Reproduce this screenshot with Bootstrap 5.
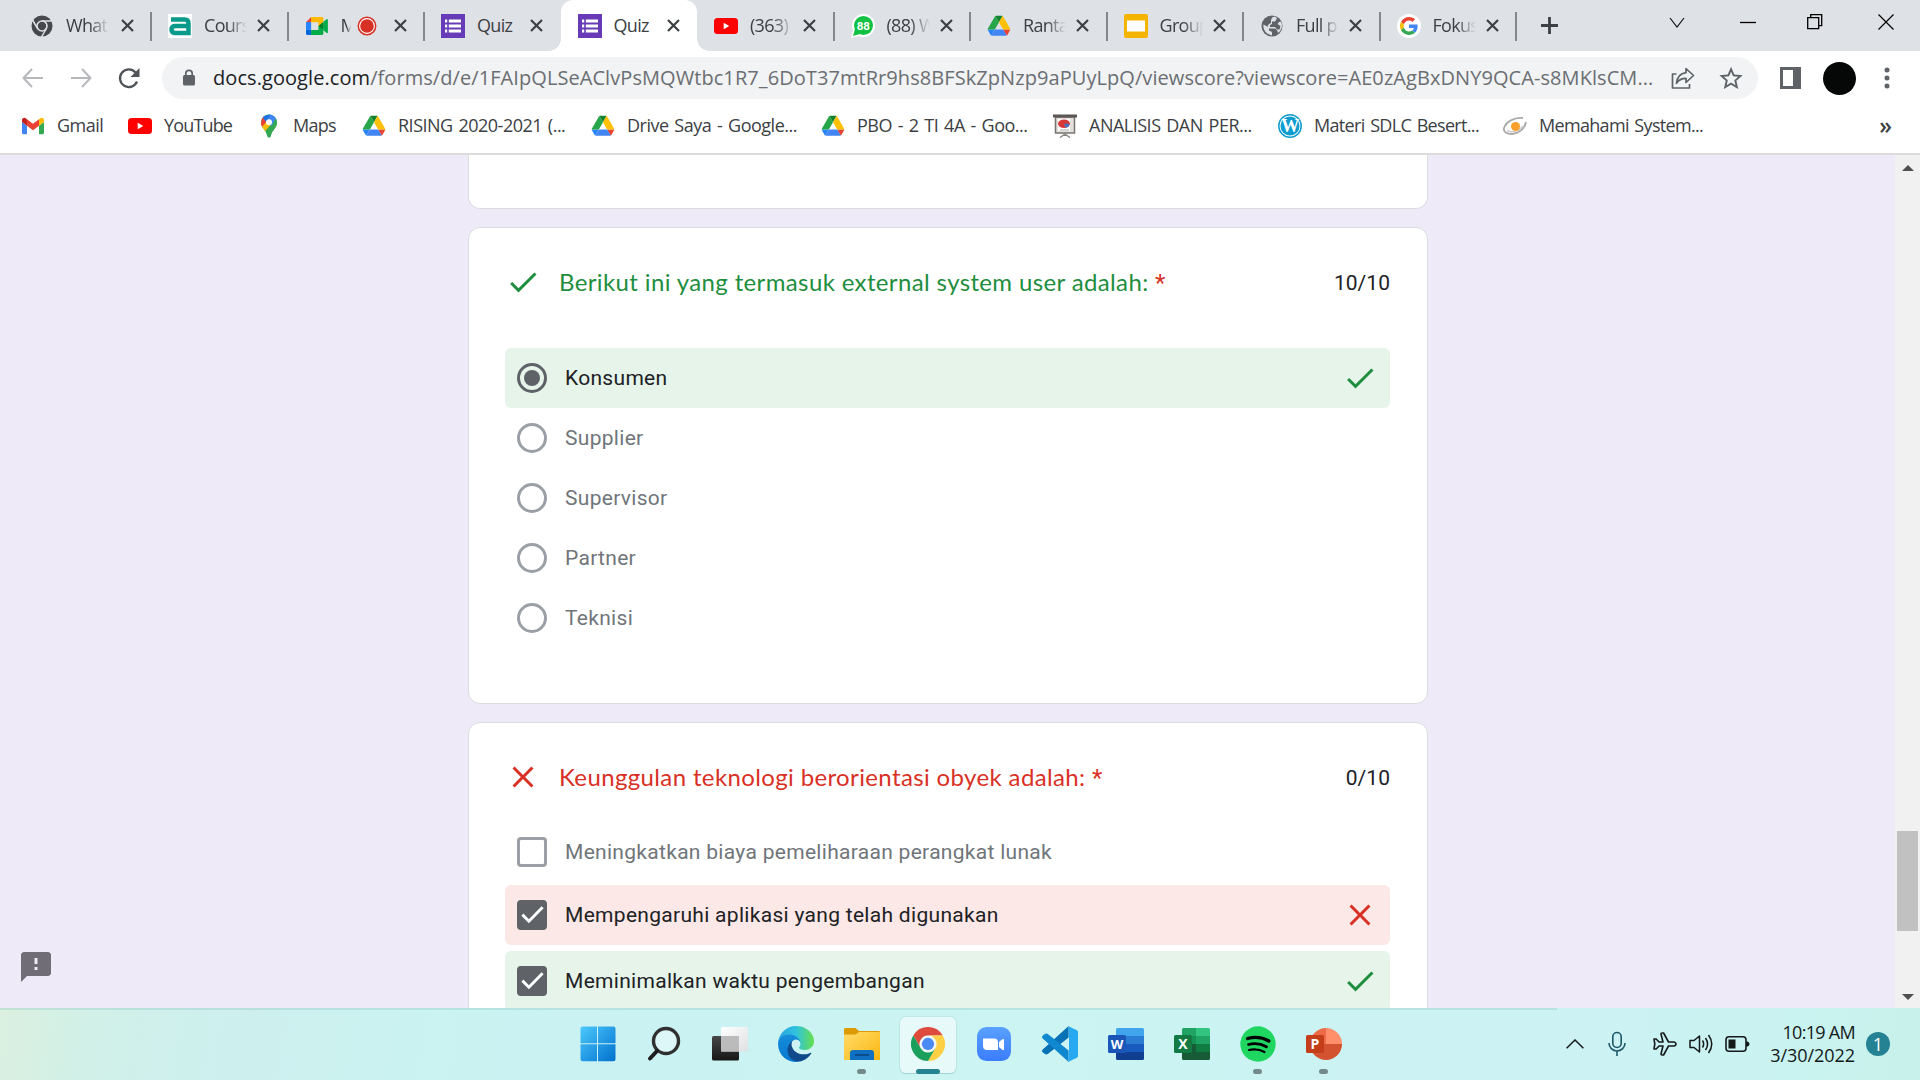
<!DOCTYPE html>
<html lang="id">
<head>
<meta charset="utf-8">
<meta name="viewport" content="width=device-width, initial-scale=1">
<title>Quiz</title>
<link href="https://cdn.jsdelivr.net/npm/bootstrap@5.3.0/dist/css/bootstrap.min.css" rel="stylesheet">
<style>
:root{--ui:"Open Sans","Noto Sans",sans-serif;--form:Roboto,"Liberation Sans",sans-serif}
body{width:1920px;height:1080px;font-family:var(--ui);color:#3c4043;background:#fff}
svg{display:block;flex:none}
/* tab strip */
.tabstrip{height:51px;background:#dee1e6;padding-left:14.5px}
.tab{width:136.5px;height:51px;padding-left:17px;position:relative;font-size:18px;flex:none}
.tab:first-child{padding-left:15.5px}
.tab:first-child .x{margin-left:11.5px}
.tab .ttl{width:43px;margin-left:12px;white-space:nowrap;overflow:hidden;letter-spacing:-.7px;-webkit-mask-image:linear-gradient(90deg,#000 55%,transparent);mask-image:linear-gradient(90deg,#000 55%,transparent)}
.tab .ttl.full{-webkit-mask-image:none;mask-image:none}
.tab .ttl.tiny{width:10px}
.tab .rec{margin-left:6px}
.tab .x{margin-left:10px}
.tab .rec + .x{margin-left:17px}
.tab.line::after{content:"";position:absolute;right:-1px;top:12px;width:2px;height:29px;background:#84888d}
.tab.active{background:#fff;border-radius:12px 12px 0 0}
.tab.active::before,.tab.active::after{content:"";position:absolute;bottom:0;width:12px;height:12px}
.tab.active::before{left:-12px;background:radial-gradient(circle at 0 0,transparent 11.5px,#fff 12px)}
.tab.active::after{right:-12px;background:radial-gradient(circle at 100% 0,transparent 11.5px,#fff 12px)}
.newtab{margin-left:24px}
.winctl{gap:47px;padding-right:26px;height:43px}
/* toolbar */
.toolbar{height:54px;padding-left:21px}
.omnibox{width:1596px;height:42px;border-radius:21px;background:#f1f3f4;margin-left:20px;padding-left:20px;padding-right:15px}
.url{font-size:20px;letter-spacing:.07px;color:#6b6e72;white-space:nowrap;width:1445px;margin-left:17px}
.url b{font-weight:400;color:#202124}
.profile{width:33px;height:33px;background:#050807;margin-left:22px}
/* bookmarks */
.bookmarks{height:50px;padding:2px 0 9px 21px;font-size:18px;border-bottom:2px solid #dcdcdc}
.bm{gap:12px;white-space:nowrap;flex:none;letter-spacing:-.5px;word-spacing:1.6px}
.bm:nth-child(1){width:107px}.bm:nth-child(2){width:129px;letter-spacing:-.85px}.bm:nth-child(3){width:105px;letter-spacing:-.7px}
.bm:nth-child(4){width:229px}.bm:nth-child(5){width:230px}.bm:nth-child(6){width:232px}
.bm:nth-child(7),.bm:nth-child(8){width:225px}
.bm:nth-child(8),.bm:nth-child(9){letter-spacing:-.68px}
.more{margin-right:28px;margin-left:auto;font-size:23px;line-height:1;font-weight:600}
/* form page */
.page{height:853px;background:#eeeaf8}
.canvas{width:1895px;gap:18px;position:relative}
.qcard{width:960px;background:#fff;border:1px solid #dadce0;border-radius:12px;font-family:var(--form);padding:36px 36.5px 0 36px;flex:none}
.qcard.tail{height:54px;border-top:0;border-radius:0 0 12px 12px}
.qcard.q1{height:477px}
.qcard.q2{height:400px}
.qhead{height:36px}
.qtitle{font-family:Lato,var(--form);font-size:24px;line-height:36px;margin-left:18.5px;letter-spacing:.37px}
.qtitle .bad{font-family:var(--form)}
.good{color:#1e8e3e}.bad{color:#d93025}
.pts{font-size:21px;letter-spacing:.05px;color:#202124;padding-top:4px}
.opt{height:60px;border-radius:6px;font-size:21px;letter-spacing:.3px;color:#70757a;padding:0 12px 0 12px}
.opt .txt{margin-left:18.5px;padding-top:1px}
.opt.ok{background:#e6f4ea;color:#202124}.opt.no{background:#fce8e6;color:#202124}
.ring{width:30px;height:30px;border:3px solid #9aa0a6;border-radius:50%}
.ring.on{border-color:#5f6368}
.ring.on i{width:16px;height:16px;border-radius:50%;background:#5f6368}
.box{width:30px;height:30px;border:3px solid #9aa0a6;border-radius:4px}
.box.on{background:#5f6368;border:0}
.report{position:absolute;left:21px;top:797px}
.scroll{width:25px;background:#f1f1f1;padding:10px 2px 8px}
.thumb{width:21px;height:100px;background:#c1c1c1;margin-top:660px}
/* taskbar */
.taskbar{height:72px;background:linear-gradient(100deg,#dbf0e0 0,#d0f0e8 100px,#cdefee 230px,#caf3f1 430px,#cbf2f3 560px,#cbf4f2 1000px,#cdf2f4 1560px,#c9f3f0 1780px,#c8f0ea 1920px);position:relative;padding-left:564.5px}
.taskbar::before{content:"";position:absolute;left:0;top:0;width:1557px;height:2px;background:rgba(120,180,180,.25)}
.app{width:66px;height:72px;position:relative;flex:none}
.app.cur::before{content:"";position:absolute;left:5.5px;top:9px;width:56px;height:56px;border-radius:6px;background:rgba(255,255,255,.55);box-shadow:0 0 0 1px rgba(150,200,200,.25),0 1px 1px rgba(100,150,150,.3)}
.app svg{position:relative}
.app.run::after{content:"";position:absolute;bottom:6px;left:28.5px;width:9px;height:5px;border-radius:3px;background:#74898a}
.app.cur::after{left:21.5px;width:24px;background:#258292}
.tray{margin-left:209.500px;color:#14191a}
.clock{font-size:18px;line-height:23px;width:105px;letter-spacing:-.7px}
.clock .day{letter-spacing:-.05px}
.note{width:24px;height:24px;background:#258292;color:#fff;font-size:18px;margin-left:11px;line-height:1}
</style>
<script src="https://cdn.jsdelivr.net/npm/bootstrap@5.3.0/dist/js/bootstrap.bundle.min.js"></script>
</head>
<body class="overflow-hidden d-flex flex-column">
<svg width="0" height="0" class="position-absolute">
<defs>
<symbol id="x" viewBox="0 0 13 13"><path d="M1 1l11 11M12 1L1 12" stroke="#3c4043" stroke-width="2.2" fill="none"/></symbol>
<symbol id="drive" viewBox="-3 -7 93.3 93.3"><path fill="#2684fc" d="m6.6 66.85 3.85 6.65c.8 1.4 1.95 2.5 3.3 3.3l13.75-23.8h-27.5c0 1.55.4 3.1 1.2 4.5z"/><path fill="#27a549" d="m43.65 25-13.75-23.8c-1.35.8-2.5 1.9-3.3 3.3l-25.4 44a9.06 9.06 0 0 0-1.2 4.5h27.5z"/><path fill="#ea4335" d="m73.55 76.8c1.35-.8 2.5-1.9 3.3-3.3l1.6-2.75 7.65-13.25c.8-1.4 1.2-2.95 1.2-4.5h-27.502l5.852 11.5z"/><path fill="#13802d" d="m43.65 25 13.75-23.8c-1.35-.8-2.9-1.2-4.5-1.2h-18.5c-1.6 0-3.15.45-4.5 1.2z"/><path fill="#4285f4" d="m59.8 53h-32.3l-13.75 23.8c1.35.8 2.9 1.2 4.5 1.2h50.8c1.6 0 3.15-.45 4.5-1.2z"/><path fill="#ffc107" d="m73.4 26.5-12.7-22c-.8-1.4-1.95-2.5-3.3-3.3l-13.75 23.8 16.15 28h27.45c0-1.55-.4-3.1-1.2-4.5z"/></symbol>
<symbol id="forms" viewBox="0 0 24 24"><path fill="#673ab7" d="M0 0h24v24H0z"/><path d="M4 5.5h2.2v3H4zM4 10.500h2.200v3H4zM4 15.500h2.200v3H4zM7.800 5.500H20v3H7.800zM7.800 10.500H20v3H7.800zM7.800 15.500H20v3H7.800z" fill="#fff"/></symbol>
<symbol id="yt" viewBox="0 0 24 24"><rect y="4" width="24" height="16" rx="3.500" fill="#f00"/><path d="M9.700 8.700v6.600l5.600-3.300z" fill="#fff"/></symbol>
<symbol id="check" viewBox="0 0 24 24"><path fill="currentColor" d="M9 16.2 4.8 12l-1.4 1.4L9 19 21 7l-1.4-1.4z"/></symbol>
<symbol id="cross" viewBox="0 0 24 24"><path fill="currentColor" d="M19 6.41 17.59 5 12 10.59 6.41 5 5 6.41 10.59 12 5 17.59 6.41 19 12 13.41 17.59 19 19 17.59 13.41 12z"/></symbol>
<symbol id="tick" viewBox="0 0 24 24"><path d="M4.300 11.700 9.500 17 20.500 5.800" fill="none" stroke="#fff" stroke-width="2.300"/></symbol>
<linearGradient id="wing" x2="1" y2="1"><stop stop-color="#4cc9fb"/><stop offset="1" stop-color="#0070cf"/></linearGradient>
<linearGradient id="ea" x2="1" y2="0"><stop stop-color="#2a9fe0"/><stop offset=".5" stop-color="#2fc3df"/><stop offset="1" stop-color="#66e04c"/></linearGradient>
<linearGradient id="eb" x2="0" y2="1"><stop stop-color="#1a8fdc"/><stop offset="1" stop-color="#0277d0"/></linearGradient>
<linearGradient id="fo" x2="1" y2="1"><stop stop-color="#ffdc6a"/><stop offset="1" stop-color="#fbb60f"/></linearGradient>
<linearGradient id="zo" x2="0" y2="1"><stop stop-color="#5aa0ff"/><stop offset="1" stop-color="#3b7dfb"/></linearGradient>
<linearGradient id="dk" x2="0" y2="1"><stop stop-color="#484848"/><stop offset="1" stop-color="#161616"/></linearGradient>
<linearGradient id="lt" x2="1" y2="1"><stop stop-color="#fff"/><stop offset="1" stop-color="#dfe0e2"/></linearGradient>
</defs></svg>

<nav class="tabstrip d-flex align-items-center" aria-label="Tabs">
  <div class="tab line d-flex align-items-center"><svg width="24" height="24" viewBox="0 0 24 24"><circle cx="12" cy="12" r="10.500" fill="#46484c"/><circle cx="12" cy="12" r="5" fill="none" stroke="#dee1e6" stroke-width="1.600"/><path d="M12 7h10M7.600 14.500 2.500 6M16.400 14.500 11.500 23" stroke="#dee1e6" stroke-width="1.500"/></svg><span class="ttl">What</span><svg class="x" width="13" height="13"><use href="#x"/></svg></div>
  <div class="tab line d-flex align-items-center"><svg width="24" height="24" viewBox="0 0 24 24"><path fill="#fff" d="M0 0h24v24H0z"/><path d="M3 5.500h13.500q4 0 4 4v9.500H7.500q-4 0-4-3.500q0-3.500 4-3.500H20" fill="none" stroke="#0a9a8b" stroke-width="4.500"/></svg><span class="ttl">Cours</span><svg class="x" width="13" height="13"><use href="#x"/></svg></div>
  <div class="tab line d-flex align-items-center"><svg width="24" height="24" viewBox="-4 -12 96 96"><path fill="#00832d" d="M49.500 36l8.530 9.750 11.470 7.330 2-17.020-2-16.640-11.690 6.440z"/><path fill="#0066da" d="M0 51.500V66c0 3.315 2.685 6 6 6h14.500l3-10.960-3-9.540-9.950-3z"/><path fill="#e94235" d="M20.500 0L0 20.500l10.550 3 9.950-3 2.950-9.410z"/><path fill="#2684fc" d="M20.500 20.500H0v31h20.500z"/><path fill="#00ac47" d="M82.600 8.680L69.500 19.420v33.660l13.160 10.790c1.970 1.540 4.850.135 4.850-2.370V11c0-2.535-2.945-3.925-4.910-2.320zM49.500 36v15.500h-29V72h43c3.315 0 6-2.685 6-6V53.080z"/><path fill="#ffba00" d="M63.500 0h-43v20.500h29V36l20-16.570V6c0-3.315-2.685-6-6-6z"/></svg><span class="ttl tiny">M</span><svg class="rec" width="20" height="20" viewBox="0 0 20 20"><circle cx="10" cy="10" r="8.700" fill="#fff" stroke="#d93025" stroke-width="1.500"/><circle cx="10" cy="10" r="6.800" fill="#d93025"/></svg><svg class="x" width="13" height="13"><use href="#x"/></svg></div>
  <div class="tab d-flex align-items-center"><svg width="24" height="24"><use href="#forms"/></svg><span class="ttl full">Quiz</span><svg class="x" width="13" height="13"><use href="#x"/></svg></div>
  <div class="tab active d-flex align-items-center"><svg width="24" height="24"><use href="#forms"/></svg><span class="ttl full">Quiz</span><svg class="x" width="13" height="13"><use href="#x"/></svg></div>
  <div class="tab line d-flex align-items-center"><svg width="24" height="24"><use href="#yt"/></svg><span class="ttl">(363)</span><svg class="x" width="13" height="13"><use href="#x"/></svg></div>
  <div class="tab line d-flex align-items-center"><svg width="24" height="24" viewBox="0 0 24 24"><circle cx="12.500" cy="11.500" r="11.500" fill="#fff"/><path fill="#fff" d="M0 24l2-8 6 6z"/><circle cx="12.500" cy="11.500" r="9.500" fill="#10c143"/><path fill="#10c143" d="M2 22l2-7 5 5z"/><text x="12.300" y="16" font-size="11.500" font-weight="700" text-anchor="middle" fill="#fff" font-family="Roboto">88</text></svg><span class="ttl">(88) W</span><svg class="x" width="13" height="13"><use href="#x"/></svg></div>
  <div class="tab line d-flex align-items-center"><svg width="24" height="24"><use href="#drive"/></svg><span class="ttl">Ranta</span><svg class="x" width="13" height="13"><use href="#x"/></svg></div>
  <div class="tab line d-flex align-items-center"><svg width="24" height="24" viewBox="0 0 24 24"><rect width="24" height="24" rx="2" fill="#f5b400"/><path fill="#fff" d="M3 6.500h18v11H3z"/></svg><span class="ttl">Group</span><svg class="x" width="13" height="13"><use href="#x"/></svg></div>
  <div class="tab line d-flex align-items-center"><svg width="24" height="24" viewBox="0 0 24 24"><circle cx="12" cy="12" r="10.500" fill="#5f6368"/><path fill="#dee1e6" d="M3.500 10.500 9 13.500v3l3 1.500v3.500A9.500 9.500 0 0 1 3.500 10.500zM12 3.500l3-1 2 2-2 3h-3v2.500l-2 1v2h5l2 2.500h2.500l1-3.500-3-2 1.500-2 2-.5A9 9 0 0 1 18 19l-1-3-2-1.500H9.500l-2-2.500 1.500-2 2-1V6.500z"/></svg><span class="ttl">Full p</span><svg class="x" width="13" height="13"><use href="#x"/></svg></div>
  <div class="tab line d-flex align-items-center"><svg width="24" height="24" viewBox="0 0 64 64"><circle cx="32" cy="32" r="32" fill="#fff"/><g transform="translate(8 8)"><path fill="#EA4335" d="M24 9.500c3.540 0 6.710 1.220 9.210 3.600l6.850-6.850C35.900 2.380 30.470 0 24 0 14.620 0 6.510 5.380 2.560 13.220l7.980 6.190C12.430 13.720 17.740 9.500 24 9.500z"/><path fill="#4285F4" d="M46.980 24.550c0-1.570-.15-3.090-.38-4.550H24v9.020h12.940c-.58 2.960-2.260 5.480-4.780 7.180l7.730 6c4.510-4.180 7.090-10.360 7.090-17.650z"/><path fill="#FBBC05" d="M10.530 28.590c-.48-1.450-.76-2.990-.76-4.590s.27-3.140.76-4.590l-7.980-6.190C.92 16.460 0 20.120 0 24c0 3.880.92 7.540 2.560 10.780l7.970-6.190z"/><path fill="#34A853" d="M24 48c6.480 0 11.930-2.130 15.890-5.810l-7.730-6c-2.150 1.450-4.920 2.300-8.160 2.300-6.260 0-11.570-4.220-13.470-9.910l-7.980 6.190C6.510 42.620 14.620 48 24 48z"/></g></svg><span class="ttl">Fokus</span><svg class="x" width="13" height="13"><use href="#x"/></svg></div>
  <svg class="newtab" width="19" height="19" viewBox="0 0 19 19"><path d="M9.500 1v17M1 9.500h17" stroke="#3c4043" stroke-width="2.800"/></svg>
  <div class="winctl d-flex align-items-center ms-auto align-self-start">
    <svg width="16" height="24" viewBox="0 0 16 24"><path d="M1 8l7 9 7-9" fill="none" stroke="#111" stroke-width="1.200"/></svg>
    <svg class="ms-2" width="16" height="24" viewBox="0 0 16 24"><path d="M0 12.500h16" stroke="#000" stroke-width="1.300"/></svg>
    <svg class="ms-1" width="16" height="24" viewBox="0 0 16 24"><path d="M.7 7.700h11v11H.7zM3.700 7.500V4.700h11v11H12" fill="none" stroke="#000" stroke-width="1.300"/></svg>
    <svg class="ms-2" width="16" height="24" viewBox="0 0 16 24"><path d="M.5 4.500l15 15M15.500 4.500l-15 15" stroke="#000" stroke-width="1.200"/></svg>
  </div>
</nav>

<div class="toolbar d-flex align-items-center">
  <svg width="24" height="24" viewBox="0 0 24 24"><path d="M22 12H3M11 3 2.500 12l8.500 9" fill="none" stroke="#b6b8bb" stroke-width="2"/></svg>
  <svg class="ms-4" width="24" height="24" viewBox="0 0 24 24"><path d="M2 12h19M13 3l8.500 9-8.500 9" fill="none" stroke="#b6b8bb" stroke-width="2"/></svg>
  <svg class="ms-4 me-1" width="24" height="24" viewBox="0 0 24 24"><path d="M20 15.500a8.800 8.800 0 1 1-1.500-9" fill="none" stroke="#505357" stroke-width="2.300"/><path d="M22.500 2v9h-9z" fill="#505357"/></svg>
  <div class="omnibox d-flex align-items-center" style="margin-left:17px">
    <svg width="14" height="20" viewBox="0 0 14 20"><rect x="1" y="7" width="12" height="10.500" rx="1.500" fill="#5f6368"/><path d="M3.800 8V5.500a3.200 3.200 0 0 1 6.400 0V8" fill="none" stroke="#5f6368" stroke-width="1.700"/></svg>
    <div class="url"><b>docs.google.com</b>/forms/d/e/1FAIpQLSeAClvPsMQWtbc1R7_6DoT37mtRr9hs8BFSkZpNzp9aPUyLpQ/viewscore?viewscore=AE0zAgBxDNY9QCA-s8MKlsCM...</div>
    <svg class="ms-auto" width="24" height="24" viewBox="0 0 24 24"><path d="M5.500 8H1.500v14h17v-4M15 2.500l7.500 7-7.500 7v-4.200c-4.500 0-7.500 1.700-9.500 5C6 12 9 7.500 15 6.700z" fill="none" stroke="#5f6368" stroke-width="1.700" stroke-linejoin="round"/></svg>
    <svg class="ms-4" width="24" height="24" viewBox="0 0 24 24"><path fill="#5f6368" d="m22 9.240-7.190-.62L12 2 9.190 8.630 2 9.240l5.460 4.730L5.820 21 12 17.270 18.180 21l-1.630-7.030zM12 15.400l-3.760 2.270 1-4.280-3.320-2.880 4.380-.38L12 6.100l1.710 4.040 4.380.38-3.320 2.880 1 4.280z" transform="translate(-2 -1.500) scale(1.170)"/></svg>
  </div>
  <svg width="21" height="22" viewBox="0 0 21 22" style="margin-left:22px"><path d="M1.500 1.500h18v19h-18z" fill="#fff" stroke="#5f6368" stroke-width="3"/><path fill="#5f6368" d="M13 0h8v22h-8z"/></svg>
  <div class="profile rounded-circle"></div>
  <svg width="6" height="24" viewBox="0 0 6 24" style="margin-left:28px"><g fill="#5f6368"><circle cx="3" cy="4" r="2.500"/><circle cx="3" cy="12" r="2.500"/><circle cx="3" cy="20" r="2.500"/></g></svg>
</div>

<div class="bookmarks d-flex align-items-center">
  <div class="bm d-flex align-items-center"><svg width="24" height="24" viewBox="50 27 92 96"><path fill="#4285f4" d="M58 108h14V74L52 59v43c0 3.320 2.690 6 6 6"/><path fill="#34a853" d="M120 108h14c3.320 0 6-2.690 6-6V59l-20 15"/><path fill="#fbbc04" d="M120 48v26l20-15v-8c0-7.420-8.470-11.650-14.400-7.200"/><path fill="#ea4335" d="M72 74V48l24 18 24-18v26L96 92"/><path fill="#c5221f" d="M52 51v8l20 15V48l-5.600-4.200c-5.940-4.450-14.400-.22-14.400 7.200"/></svg><span>Gmail</span></div>
  <div class="bm d-flex align-items-center"><svg width="24" height="24"><use href="#yt"/></svg><span>YouTube</span></div>
  <div class="bm d-flex align-items-center"><svg width="24" height="24" viewBox="0 0 24 24"><defs><clipPath id="pin"><path d="M12 .5a8 8 0 0 1 8 8c0 5-5 7.500-6.300 13.500-.5 2-2.900 2-3.400 0C9 16 4 13.500 4 8.500a8 8 0 0 1 8-8z"/></clipPath></defs><g clip-path="url(#pin)"><path fill="#34a853" d="M0 0h24v24H0z"/><path fill="#fbbc04" d="M0 16 12 1.500 17 7 6.500 19z"/><path fill="#ea4335" d="M0 0h7l4 6-8 9z"/><path fill="#1a73e8" d="M5.500 3 12 0h3l-6 8z"/><path fill="#4285f4" d="M14 0l8 4-7.500 8-4-5z"/><path fill="#34a853" d="M19 4l3 8-9 12-4-3z"/></g><circle cx="12" cy="8.300" r="3" fill="#fff"/></svg><span>Maps</span></div>
  <div class="bm d-flex align-items-center"><svg width="24" height="24"><use href="#drive"/></svg><span>RISING 2020-2021 (...</span></div>
  <div class="bm d-flex align-items-center"><svg width="24" height="24"><use href="#drive"/></svg><span>Drive Saya - Google...</span></div>
  <div class="bm d-flex align-items-center"><svg width="24" height="24"><use href="#drive"/></svg><span>PBO - 2 TI 4A - Goo...</span></div>
  <div class="bm d-flex align-items-center"><svg width="24" height="24" viewBox="0 0 24 24"><path fill="#e3e0dc" stroke="#77736f" stroke-width="1.500" d="M2.500 3h19v16h-19z"/><path fill="#fff" d="M5 5h12v12H5z"/><path fill="#5b5654" d="M0 .5h24v3H0z"/><ellipse cx="11" cy="9.800" rx="6" ry="4.200" fill="#d8373a"/><path d="M11 9.800h5.500q0 3.500-4 4z" fill="#4472c4"/><path d="M7 16h9" stroke="#aaa"/><path d="M12 19v3M12 20l-5 3.500M12 20l5 3.500" stroke="#8c8884" stroke-width="1.500"/></svg><span>ANALISIS DAN PER...</span></div>
  <div class="bm d-flex align-items-center"><svg width="24" height="24" viewBox="0 0 24 24"><circle cx="12" cy="12" r="11.200" fill="#fff" stroke="#0f9ccf" stroke-width="1.500"/><circle cx="12" cy="12" r="9.500" fill="#0f9ccf"/><text x="12" y="18.200" font-family="Liberation Serif,serif" font-weight="700" font-size="18" text-anchor="middle" fill="#fff">W</text></svg><span>Materi SDLC Besert...</span></div>
  <div class="bm d-flex align-items-center"><svg width="24" height="24" viewBox="0 0 24 24"><path d="M20 4C11 3 3 8 1 14c-1 4 3 6 8 6 8-1 13-6 14-12" fill="none" stroke="#aaa" stroke-width="1.800"/><path d="M4 16c3 3 11 2 16-4" fill="none" stroke="#ccc" stroke-width="1.500"/><circle cx="12.500" cy="12.500" r="4.500" fill="#fba02d"/></svg><span>Memahami System...</span></div>
  <span class="more">»</span>
</div>

<main class="page d-flex overflow-hidden">
  <div class="canvas d-flex flex-column align-items-center">
    <section class="qcard tail"></section>
    <section class="qcard q1">
      <div class="qhead d-flex align-items-center good"><svg width="36" height="36"><use href="#check"/></svg><div class="qtitle">Berikut ini yang termasuk external system user adalah: <span class="bad">*</span></div><div class="pts ms-auto">10/10</div></div>
      <div class="opts mt-5">
        <div class="opt ok d-flex align-items-center"><span class="ring on d-flex align-items-center justify-content-center"><i></i></span><span class="txt">Konsumen</span><svg class="good ms-auto" width="36" height="36"><use href="#check"/></svg></div>
        <div class="opt d-flex align-items-center"><span class="ring"></span><span class="txt">Supplier</span></div>
        <div class="opt d-flex align-items-center"><span class="ring"></span><span class="txt">Supervisor</span></div>
        <div class="opt d-flex align-items-center"><span class="ring"></span><span class="txt">Partner</span></div>
        <div class="opt d-flex align-items-center"><span class="ring"></span><span class="txt">Teknisi</span></div>
      </div>
    </section>
    <section class="qcard q2">
      <div class="qhead d-flex align-items-center bad"><svg width="36" height="36"><use href="#cross"/></svg><div class="qtitle">Keunggulan teknologi berorientasi obyek adalah: <span class="bad">*</span></div><div class="pts ms-auto">0/10</div></div>
      <div class="opts" style="margin-top:27px">
        <div class="opt d-flex align-items-center"><span class="box"></span><span class="txt">Meningkatkan biaya pemeliharaan perangkat lunak</span></div>
        <div class="opt no d-flex align-items-center" style="margin-top:3px"><span class="box on"><svg width="30" height="30"><use href="#tick"/></svg></span><span class="txt">Mempengaruhi aplikasi yang telah digunakan</span><svg class="bad ms-auto" width="36" height="36"><use href="#cross"/></svg></div>
        <div class="opt ok d-flex align-items-center" style="margin-top:6px"><span class="box on"><svg width="30" height="30"><use href="#tick"/></svg></span><span class="txt">Meminimalkan waktu pengembangan</span><svg class="good ms-auto" width="36" height="36"><use href="#check"/></svg></div>
      </div>
    </section>
    <svg class="report" width="30" height="30" viewBox="2 2 20 20"><path fill="#716d76" d="M20 2H4c-1.100 0-1.990.9-1.990 2L2 22l4-4h14c1.100 0 2-.9 2-2V4c0-1.100-.9-2-2-2zm-7 12h-2v-2h2v2zm0-4h-2V6h2v4z"/></svg>
  </div>
  <div class="scroll d-flex flex-column align-items-center">
    <svg width="12" height="6" viewBox="0 0 12 6"><path d="M0 6l6-6 6 6z" fill="#505050"/></svg>
    <div class="thumb"></div>
    <svg class="mt-auto" width="12" height="6" viewBox="0 0 12 6"><path d="M0 0l6 6 6-6z" fill="#505050"/></svg>
  </div>
</main>

<footer class="taskbar d-flex align-items-center">
  <div class="app d-flex align-items-center justify-content-center"><svg width="36" height="36" viewBox="0 0 36 36"><path fill="url(#wing)" d="M2.500.5H17v16.700H.5V2.500a2 2 0 0 1 2-2zM18 .5h15.500a2 2 0 0 1 2 2v14.700H18zM.5 18.300H17v17H2.500a2 2 0 0 1-2-2zM18 18.300h17.500v15a2 2 0 0 1-2 2H18z"/></svg></div>
  <div class="app d-flex align-items-center justify-content-center"><svg width="34" height="36" viewBox="0 0 34 36"><circle cx="19" cy="15" r="12.500" fill="#eafafb" fill-opacity=".6" stroke="#303030" stroke-width="3.400"/><path d="M10 25l-7 7.500" stroke="#1d1d1d" stroke-width="4" stroke-linecap="round"/></svg></div>
  <div class="app d-flex align-items-center justify-content-center"><svg width="36" height="36" viewBox="0 0 36 36"><rect y="10" width="27" height="24.500" rx="1.500" fill="url(#dk)"/><rect x="9" y="1" width="27" height="24.500" rx="1.500" fill="url(#lt)"/><path fill="#bbb" d="M9 10h18v15.500H9z"/></svg></div>
  <div class="app d-flex align-items-center justify-content-center"><svg width="36" height="36" viewBox="4.600 4.900 256 256"><path fill="#114a8b" d="M235.680 195.460a93.730 93.730 0 0 1-10.540 4.710 101.870 101.870 0 0 1-35.900 6.460c-47.320 0-88.540-32.550-88.540-74.320A31.480 31.480 0 0 1 117.130 105c-42.800 1.800-53.800 46.400-53.800 72.530 0 73.880 68.090 81.370 82.760 81.370 7.910 0 19.840-2.300 27-4.560l1.310-.44a128.340 128.340 0 0 0 66.600-52.800 4 4 0 0 0-5.320-5.640z"/><path fill="url(#eb)" d="M110.340 246.340A79.200 79.200 0 0 1 87.600 225a80.720 80.720 0 0 1 29.530-120c3.120-1.470 8.450-4.130 15.540-4a32.350 32.350 0 0 1 25.690 13 31.880 31.880 0 0 1 6.360 18.660c0-.21 24.460-79.600-80-79.600-43.900 0-80 41.660-80 78.210a130.150 130.150 0 0 0 12.110 56 128 128 0 0 0 156.380 67.110 75.550 75.550 0 0 1-62.780-8z"/><path fill="url(#ea)" d="M156.940 153.780c-.81 1.050-3.300 2.500-3.300 5.660 0 2.610 1.700 5.120 4.720 7.230 14.380 10 41.490 8.680 41.560 8.680a59.560 59.560 0 0 0 30.270-8.350 61.380 61.380 0 0 0 30.430-52.880c.26-22.410-8-37.310-11.340-43.910-21.190-41.440-66.920-65.290-116.670-65.290a128 128 0 0 0-128 126.200c.48-36.540 36.800-66.050 80-66.050 3.500 0 23.460.34 42 10.070 16.340 8.580 24.900 18.940 30.850 29.210 6.180 10.670 7.280 24.150 7.280 29.520 0 5.370-2.740 13.330-7.800 19.910z"/></svg></div>
  <div class="app run d-flex align-items-center justify-content-center"><svg width="36" height="36" viewBox="0 0 36 36"><path fill="#dd9a05" d="M0 3.500A1.500 1.500 0 0 1 1.500 2h10L15 5h20a1 1 0 0 1 1 1v4H0z"/><path fill="url(#fo)" d="M0 8.500h11.500L15 6h21v28H0z"/><path fill="#0f6fc0" d="M6 34V27a3 3 0 0 1 3-3h18a3 3 0 0 1 3 3v7z"/><path d="M11 29h14" stroke="#0b4c8c" stroke-width="2"/></svg></div>
  <div class="app run cur d-flex align-items-center justify-content-center"><svg width="34" height="34" viewBox="0 0 48 48"><path fill="#de4a3c" d="M24 12H44.800A24 24 0 0 0 3.200 12L13.600 30A12 12 0 0 1 24 12z"/><path fill="#ffd044" d="M44.800 12A24 24 0 0 1 24 48L34.400 30A12 12 0 0 0 24 12z"/><path fill="#1b9f5c" d="M24 48A24 24 0 0 1 3.200 12L13.600 30A12 12 0 0 0 34.400 30z"/><circle cx="24" cy="24" r="11" fill="#f3f6f8"/><circle cx="24" cy="24" r="8.700" fill="#4a8af4"/></svg></div>
  <div class="app d-flex align-items-center justify-content-center"><svg width="34" height="34" viewBox="0 0 34 34"><rect width="34" height="34" rx="9.500" fill="url(#zo)"/><path fill="#fff" d="M6 11.500h11a4 4 0 0 1 4 4V23H10a4 4 0 0 1-4-4zM22 15l3-2.500q2-1.200 2 0v10q0 1.200-2 0L22 20z"/></svg></div>
  <div class="app d-flex align-items-center justify-content-center"><svg width="36" height="36" viewBox="0 0 100 100"><path fill="#0871b5" d="M74 0 2 65q-4 5 0 8l6 5q4 2 8 0L74 32z"/><path fill="#1088d0" d="M74 100 2 35q-4-5 0-8l6-5q4-2 8 0l58 46z"/><path fill="#27a9f2" d="M72 0l25 12q3 2 3 5v66q0 3-3 5l-25 12 3-4V4z"/></svg></div>
  <div class="app d-flex align-items-center justify-content-center"><svg width="36" height="34" viewBox="0 0 36 34"><path fill="#41a5ee" d="M8 2.500A1.500 1.500 0 0 1 9.500 1h25A1.500 1.500 0 0 1 36 2.500V9H8z"/><path fill="#2b7cd3" d="M8 9h28v8H8z"/><path fill="#185abd" d="M8 17h28v8H8z"/><path fill="#103f91" d="M8 25h28v6.500a1.500 1.500 0 0 1-1.500 1.500h-25A1.500 1.500 0 0 1 8 31.500z"/><rect y="8" width="18" height="18" rx="1.500" fill="#1b55b8"/><text x="9" y="21.500" font-family="Open Sans" font-weight="700" font-size="13" text-anchor="middle" fill="#fff">W</text></svg></div>
  <div class="app d-flex align-items-center justify-content-center"><svg width="36" height="34" viewBox="0 0 36 34"><path fill="#21a366" d="M8 2.500A1.500 1.500 0 0 1 9.500 1H22v8H8z"/><path fill="#33c481" d="M22 1h12.500A1.500 1.500 0 0 1 36 2.500V9H22z"/><path fill="#149354" d="M8 9h14v8H8z"/><path fill="#21a366" d="M22 9h14v8H22z"/><path fill="#185c37" d="M8 17h28v14.500a1.500 1.500 0 0 1-1.500 1.500h-25A1.500 1.500 0 0 1 8 31.500z"/><path fill="#107c41" d="M22 17h14v8H22z"/><rect y="8" width="18" height="18" rx="1.500" fill="#127a42"/><text x="9" y="22" font-family="Open Sans" font-weight="700" font-size="14" text-anchor="middle" fill="#fff">X</text></svg></div>
  <div class="app run d-flex align-items-center justify-content-center"><svg width="36" height="36" viewBox="0 0 36 36"><circle cx="18" cy="18" r="17.700" fill="#1fd760"/><path d="M7.500 12.500q11.500-3.200 21.500 2.500" fill="none" stroke="#000" stroke-width="3.200" stroke-linecap="round"/><path d="M8.500 18.500q9.500-2.500 18 2.300" fill="none" stroke="#000" stroke-width="2.700" stroke-linecap="round"/><path d="M9 24q8.500-1.800 15.500 2" fill="none" stroke="#000" stroke-width="2.200" stroke-linecap="round"/></svg></div>
  <div class="app run d-flex align-items-center justify-content-center"><svg width="36" height="34" viewBox="0 0 36 34"><path fill="#ed6c47" d="M20 1v16H4A16 16 0 0 1 20 1z"/><path fill="#ff8f6b" d="M20 1a16 16 0 0 1 16 16H20z"/><path fill="#d35230" d="M4 17h32a16 16 0 0 1-32 0z"/><rect y="8" width="18" height="18" rx="1.500" fill="#c43e1c"/><text x="9" y="22" font-family="Open Sans" font-weight="700" font-size="14" text-anchor="middle" fill="#fff">P</text></svg></div>
  <div class="tray d-flex align-items-center">
    <svg width="18" height="10" viewBox="0 0 18 10"><path d="M.6 9.300 9 1l8.400 8.300" fill="none" stroke="#14191a" stroke-width="1.500"/></svg>
    <svg class="ms-4" width="18" height="26" viewBox="0 0 18 26"><g fill="none" stroke="#1c5866" stroke-width="1.600"><rect x="4.800" y="1.500" width="8.400" height="15" rx="4.200"/><path d="M1 12a8 8 0 0 0 16 0M9 20v5"/></g></svg>
    <svg width="24" height="24" viewBox="0 0 24 24" style="margin-left:27px"><path d="M1 7h2.200L6 10h4L8 2q-.2-1 1-1h1.600L15.500 10H21q2 .3 2 2t-2 2h-5.500L10.600 23H9q-1 0-1-1l2-8H6l-2.800 3H1l.8-5z" fill="none" stroke="#14191a" stroke-width="1.600" stroke-linejoin="round"/></svg>
    <svg width="25" height="24" viewBox="0 0 25 24" style="margin-left:12px"><g fill="none" stroke="#14191a" stroke-width="1.500" stroke-linejoin="round"><path d="M1 8.500h4L10.500 4v16L5 15.500H1z"/><path d="M13.500 8.500q2.300 3.500 0 7M16.500 6q4.200 6 0 12M19.500 3q6.500 9 0 18"/></g></svg>
    <svg width="25" height="18" viewBox="0 0 25 18" style="margin-left:11px"><rect x="1" y="1.800" width="20" height="14.400" rx="3" fill="none" stroke="#14191a" stroke-width="1.600"/><path fill="#14191a" d="M3.500 4.500h7v9h-7zM21 6.500h1.500q2 .5 2 2.500t-2 2.500H21z"/></svg>
    <div class="clock text-end"><div>10:19 AM</div><div class="day">3/30/2022</div></div>
    <div class="note rounded-circle d-flex align-items-center justify-content-center">1</div>
  </div>
</footer>
</body>
</html>
